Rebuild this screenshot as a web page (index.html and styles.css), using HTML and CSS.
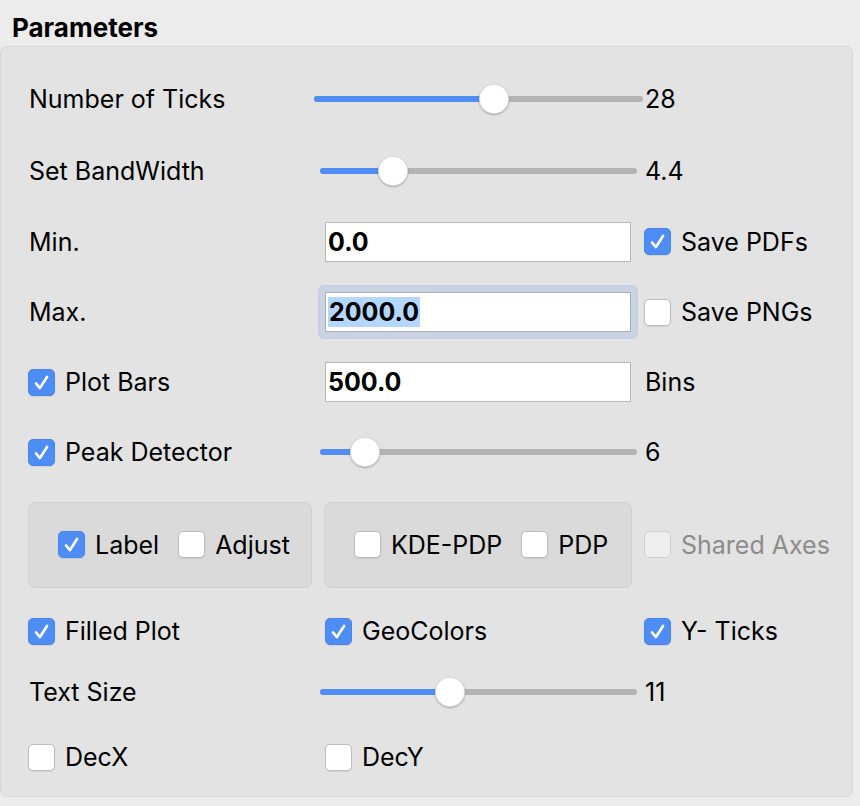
FILE: index.html
```html
<!DOCTYPE html>
<html>
<head>
<meta charset="utf-8">
<link rel="stylesheet" href="styles.css">
</head>
<body>
<div class="window">
  <div class="title">Parameters</div>
  <div class="group">
    <div class="grid">
      <!-- row 1 -->
      <div class="lbl">Number of Ticks</div>
      <div class="slider s-wide"><div class="track"><div class="fill" style="width:180px"></div></div><div class="knob" style="left:165px"></div></div>
      <div class="val">28</div>
      <!-- row 2 -->
      <div class="lbl">Set BandWidth</div>
      <div class="slider s-std"><div class="track"><div class="fill" style="width:73px"></div></div><div class="knob" style="left:58px"></div></div>
      <div class="val">4.4</div>
      <!-- row 3 -->
      <div class="lbl">Min.</div>
      <div class="field"><div class="input">0.0</div></div>
      <label class="check c3"><span class="box on"><svg viewBox="0 0 27 27"><path d="M7.5 14.5 L11.8 19.5 L19.5 7.5"/></svg></span><span>Save PDFs</span></label>
      <!-- row 4 -->
      <div class="lbl">Max.</div>
      <div class="field"><div class="ring"><div class="input"><span class="sel">2000.0</span></div></div></div>
      <label class="check c3"><span class="box"></span><span>Save PNGs</span></label>
      <!-- row 5 -->
      <label class="check"><span class="box on"><svg viewBox="0 0 27 27"><path d="M7.5 14.5 L11.8 19.5 L19.5 7.5"/></svg></span><span>Plot Bars</span></label>
      <div class="field"><div class="input">500.0</div></div>
      <div class="val">Bins</div>
      <!-- row 6 -->
      <label class="check"><span class="box on"><svg viewBox="0 0 27 27"><path d="M7.5 14.5 L11.8 19.5 L19.5 7.5"/></svg></span><span>Peak Detector</span></label>
      <div class="slider s-std"><div class="track"><div class="fill" style="width:45px"></div></div><div class="knob" style="left:30px"></div></div>
      <div class="val">6</div>
      <!-- row 7 -->
      <div class="sub sub1">
        <label class="check"><span class="box on"><svg viewBox="0 0 27 27"><path d="M7.5 14.5 L11.8 19.5 L19.5 7.5"/></svg></span><span>Label</span></label>
        <label class="check"><span class="box"></span><span>Adjust</span></label>
      </div>
      <div class="sub sub2">
        <label class="check"><span class="box"></span><span>KDE-PDP</span></label>
        <label class="check"><span class="box"></span><span>PDP</span></label>
      </div>
      <label class="check c3 disabled"><span class="box"></span><span>Shared Axes</span></label>
      <!-- row 8 -->
      <label class="check"><span class="box on"><svg viewBox="0 0 27 27"><path d="M7.5 14.5 L11.8 19.5 L19.5 7.5"/></svg></span><span>Filled Plot</span></label>
      <label class="check c2"><span class="box on"><svg viewBox="0 0 27 27"><path d="M7.5 14.5 L11.8 19.5 L19.5 7.5"/></svg></span><span>GeoColors</span></label>
      <label class="check c3"><span class="box on"><svg viewBox="0 0 27 27"><path d="M7.5 14.5 L11.8 19.5 L19.5 7.5"/></svg></span><span>Y- Ticks</span></label>
      <!-- row 9 -->
      <div class="lbl">Text Size</div>
      <div class="slider s-std"><div class="track"><div class="fill" style="width:130px"></div></div><div class="knob" style="left:115px"></div></div>
      <div class="val">11</div>
      <!-- row 10 -->
      <label class="check"><span class="box"></span><span>DecX</span></label>
      <label class="check c2"><span class="box"></span><span>DecY</span></label>
      <div></div>
    </div>
  </div>
</div>
</body>
</html>
```
FILE: styles.css
```css
* { box-sizing: border-box; }
html, body {
  margin: 0;
  padding: 0;
  background: #ececec;
}
body {
  width: 860px;
  height: 806px;
  overflow: hidden;
  font-family: Inter, "Liberation Sans", sans-serif;
  font-size: 25px;
  color: #000;
}
.window {
  padding: 0;
}
.title {
  height: 46px;
  padding: 13px 0 0 12px;
  font-size: 26px;
  font-weight: 700;
  line-height: 30px;
}
.group {
  width: 853px;
  height: 751px;
  background: #e3e3e3;
  border: 1px solid #d8d8d8;
  border-radius: 7px;
}
.grid {
  display: grid;
  grid-template-columns: 286px 329px 1fr;
  grid-template-rows: 72px 71px 71px 70px 70px 70px 115px 58px 64px 66px;
  align-items: center;
  padding: 16px 0 0 27px;
}
.lbl {
  padding-left: 1px;
  line-height: 30px;
}
.val {
  padding-left: 2px;
  line-height: 30px;
}
/* sliders */
.slider {
  position: relative;
  height: 30px;
  display: flex;
  align-items: center;
}
.s-wide { width: 329px; }
.s-std { width: 317px; margin-left: 6px; }
.track {
  width: 100%;
  height: 6px;
  border-radius: 3px;
  background: #b3b3b3;
  overflow: hidden;
}
.fill {
  height: 100%;
  background: #4e8df5;
}
.knob {
  position: absolute;
  top: 0;
  width: 30px;
  height: 30px;
  border-radius: 50%;
  background: #fff;
  border: 1px solid rgba(0,0,0,0.12);
  box-shadow: 0 1px 2px rgba(0,0,0,0.28);
}
/* inputs */
.field {
  padding-left: 11px;
  display: flex;
}
.input {
  width: 306px;
  height: 40px;
  background: #fff;
  border: 1px solid #b7b7b7;
  padding: 0 2px;
  font-weight: 700;
  font-size: 25px;
  line-height: 38px;
}
.ring {
  margin: -7px 0 -7px -7px;
  padding: 6px;
  border: 1px solid #c4cddd;
  background: #cad3e2;
  border-radius: 6px;
}
.ring .input { border-color: #a9b1bf; }
.sel {
  background: #b3d7ff;
  display: inline-block;
  line-height: 30px;
  padding: 0 1px;
}
/* checkboxes */
.check {
  display: flex;
  align-items: center;
  gap: 10px;
  line-height: 30px;
  white-space: nowrap;
}
.c2 { margin-left: 11px; }
.c3 { margin-left: 1px; }
.box {
  flex: none;
  width: 27px;
  height: 27px;
  border-radius: 5px;
  background: #fff;
  border: 1px solid #bdbdbd;
  box-shadow: 0 0.5px 1px rgba(0,0,0,0.08);
  display: flex;
}
.box.on {
  background: #4e8df5;
  border-color: #4a86ea;
}
.box svg {
  width: 100%;
  height: 100%;
}
.box svg path {
  fill: none;
  stroke: #fff;
  stroke-width: 2.8;
  stroke-linecap: round;
  stroke-linejoin: round;
}
.disabled { color: #8c8c8c; }
.disabled .box {
  background: #eeeeee;
  border-color: #cfcfcf;
  box-shadow: none;
}
/* sub group boxes */
.sub {
  height: 86px;
  background: #dadada;
  border: 1px solid #d0d0d0;
  border-radius: 7px;
  display: flex;
  align-items: center;
  gap: 19px;
  padding-left: 29px;
}
.sub1 { width: 284px; }
.sub2 { width: 308px; margin-left: 10px; }
```
